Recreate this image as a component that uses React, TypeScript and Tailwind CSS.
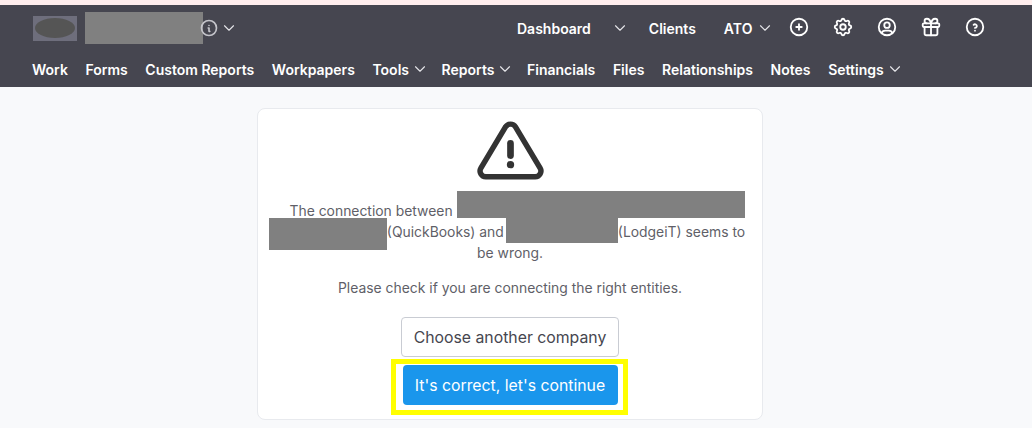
import { TbChevronDown, TbCirclePlus, TbGift, TbHelpCircle, TbInfoCircle, TbSettings, TbUserCircle } from "react-icons/tb"

const NAV_ITEMS = [
  { label: "Work" },
  { label: "Forms" },
  { label: "Custom Reports" },
  { label: "Workpapers" },
  { label: "Tools", caret: true },
  { label: "Reports", caret: true },
  { label: "Financials" },
  { label: "Files" },
  { label: "Relationships" },
  { label: "Notes" },
  { label: "Settings", caret: true },
]

function Header() {
  return (
    <header className="bg-[#464650] h-[82px] flex flex-col text-white text-[14px] font-semibold">
      <div className="h-[46px] flex items-center pl-[33px]">
        <div className="w-[44px] h-[25px] bg-[#6e6e7c] flex items-center justify-center">
          <div className="w-[40px] h-[20px] rounded-[50%] bg-[#555555]" />
        </div>
        <div className="w-[118px] h-[32px] bg-[#808080] ml-[8px]" />
        <TbInfoCircle className="w-[20px] h-[20px] text-[#c4c4ca] -ml-[4px]" />
        <TbChevronDown strokeWidth={1.5} className="w-[18px] h-[18px] text-[#e4e4e8] ml-[1px]" />
        <span className="ml-[279px]">Dashboard</span>
        <TbChevronDown strokeWidth={1.5} className="w-[18px] h-[18px] text-[#e4e4e8] ml-[20px]" />
        <span className="ml-[20px]">Clients</span>
        <span className="ml-[28px]">ATO</span>
        <TbChevronDown strokeWidth={1.5} className="w-[18px] h-[18px] text-[#e4e4e8] ml-[4px]" />
        <div className="ml-[14px] flex items-center gap-[22px] -mt-[2px]">
          <TbCirclePlus className="w-[22px] h-[22px]" />
          <TbSettings className="w-[22px] h-[22px]" />
          <TbUserCircle className="w-[22px] h-[22px]" />
          <TbGift className="w-[22px] h-[22px]" />
          <TbHelpCircle className="w-[22px] h-[22px]" />
        </div>
      </div>
      <nav className="flex items-center gap-[17.6px] pl-[32px] h-[36px]">
        {NAV_ITEMS.map((item) => (
          <span key={item.label} className="flex items-center gap-[2px]">
            {item.label}
            {item.caret && <TbChevronDown strokeWidth={1.5} className="w-[18px] h-[18px] text-[#e4e4e8] -mr-[5px]" />}
          </span>
        ))}
      </nav>
    </header>
  )
}

export default function App() {
  return (
    <div className="relative w-[1032px] h-[428px] overflow-hidden bg-[#f8f9fb] font-['Inter',sans-serif]">
      <div className="h-[5px] bg-[#ffeeee]" />
      <Header />

      <main className="flex justify-center pt-[21px] pr-[12px]">
        <section className="w-[506px] h-[312px] bg-white border border-[#e8eaee] rounded-[8px] flex flex-col items-center">
          <svg viewBox="0 0 24 24" fill="none" stroke="#333333" strokeWidth="1.8" strokeLinecap="round" strokeLinejoin="round" className="w-[73px] h-[73px] mt-[7px] shrink-0">
            <path strokeWidth="2.2" d="M12 9v4" />
            <path d="M10.363 3.591l-8.106 13.534a1.914 1.914 0 0 0 1.636 2.871h16.214a1.914 1.914 0 0 0 1.636 -2.87l-8.106 -13.536a1.914 1.914 0 0 0 -3.274 0z" />
            <path strokeWidth="2.4" d="M12 16h.01" />
          </svg>

          <p className="w-[484px] text-center text-[13.9px] leading-[21px] text-[#5f5f68] mt-[12px]">
            <span className="inline-block w-[14px]" />
            The connection between{" "}
            <span className="inline-block w-[288px] h-[27px] -mt-[20px] -mb-[4px] align-middle bg-[#808080]" />{" "}
            <span className="inline-block w-[118px] h-[32px] -mt-[14px] -mb-[16px] align-middle bg-[#808080]" />
            (QuickBooks) and
            <span className="inline-block w-[112px] h-[25px] ml-[2px] -mt-[14px] -mb-[8px] align-middle bg-[#808080]" />
            (LodgeiT) seems to
            <span className="inline-block w-[6px]" /> be wrong.
          </p>

          <p className="text-[13.9px] leading-[21px] text-[#5f5f68] mt-[14px]">
            Please check if you are connecting the right entities.
          </p>

          <button type="button" className="w-[218px] h-[40px] mt-[18px] pt-[2px] bg-white border border-[#c9ccd3] rounded-[4px] text-[15.8px] text-[#46464f]">
            Choose another company
          </button>
          <button type="button" className="w-[215px] h-[40px] mt-[8px] pt-[2px] bg-[#1a96ec] rounded-[4px] text-[15.8px] text-white">
            It's correct, let's continue
          </button>
        </section>
      </main>

      {/* annotation box drawn over the page */}
      <div className="absolute left-[391px] top-[359px] w-[237px] h-[56px] border-[5px] border-[#ffff00] pointer-events-none" />
    </div>
  )
}
